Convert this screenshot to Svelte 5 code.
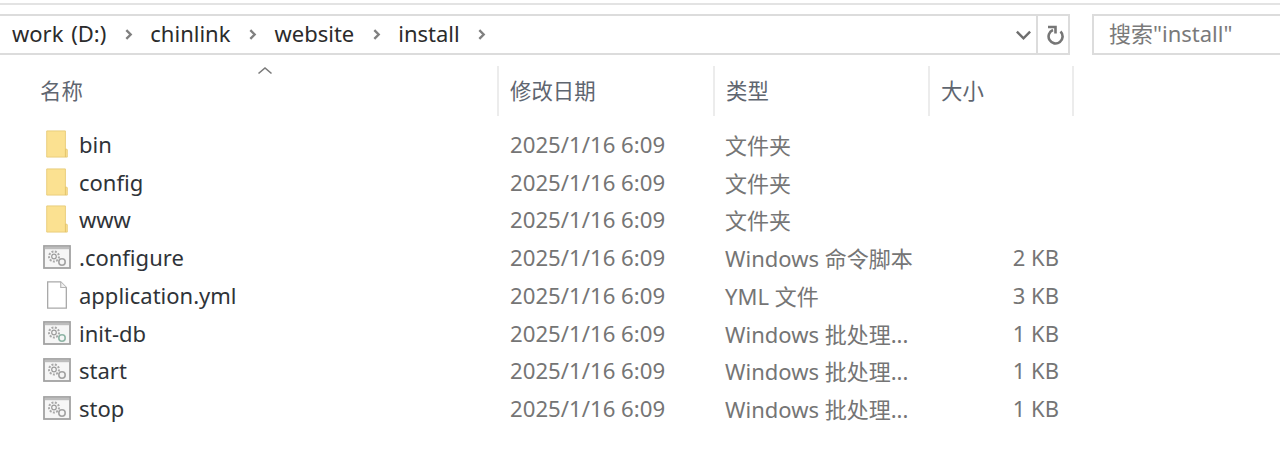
<script>
  const crumbs = ['work (D:)', 'chinlink', 'website', 'install'];
  const date = '2025/1/16 6:09';
  const files = [
    { name: 'bin', icon: 'folder', type: '文件夹', size: '' },
    { name: 'config', icon: 'folder', type: '文件夹', size: '' },
    { name: 'www', icon: 'folder', type: '文件夹', size: '' },
    { name: '.configure', icon: 'script', type: 'Windows 命令脚本', size: '2 KB' },
    { name: 'application.yml', icon: 'file', type: 'YML 文件', size: '3 KB' },
    { name: 'init-db', icon: 'script', type: 'Windows 批处理...', size: '1 KB' },
    { name: 'start', icon: 'script', type: 'Windows 批处理...', size: '1 KB' },
    { name: 'stop', icon: 'script', type: 'Windows 批处理...', size: '1 KB' }
  ];
</script>

<div class="window">
  <div class="toolbar">
    <div class="address">
      <div class="crumbs">
        {#each crumbs as crumb}
          <span class="crumb">{crumb}</span>
          <svg class="chevron" viewBox="0 0 8 12"><path d="M2 2l4 4-4 4" /></svg>
        {/each}
      </div>
      <svg class="dropdown" viewBox="0 0 18 12"><path d="M2 2.5l7 7 7-7" /></svg>
      <div class="refresh">
        <svg viewBox="0 0 20 20"><path d="M3 2h7.5v6.5M8 5A7 7 0 1 0 15.5 6.5" /></svg>
      </div>
    </div>
    <div class="search">搜索"install"</div>
  </div>

  <div class="header">
    <div class="head name">
      名称
      <svg class="sort" viewBox="0 0 16 8"><path d="M1.5 7l6.5-5.5 6.5 5.5" /></svg>
    </div>
    <div class="head">修改日期</div>
    <div class="head">类型</div>
    <div class="head last">大小</div>
  </div>

  <div class="rows">
    {#each files as file}
      <div class="row">
        <div class="cell-name">
          <span class="icon">
            {#if file.icon === 'folder'}
              <svg viewBox="0 0 24 30">
                <path d="M1 1h20v19l2 1v8H1z" fill="#fbe191" stroke="#e8cb78" />
                <path d="M21 20v9" stroke="#e2c26a" fill="none" />
              </svg>
            {:else if file.icon === 'file'}
              <svg viewBox="0 0 24 30">
                <path d="M2 1h14l6 6v22H2z" fill="#fff" stroke="#a9a9a9" stroke-width="1.4" />
                <path d="M16 1v6h6" fill="#f2f2f2" stroke="#b4b4b4" stroke-width="1.2" />
              </svg>
            {:else}
              <svg viewBox="0 0 28 24">
                <rect x="1" y="1" width="26" height="22" fill="#f6f6f6" stroke="#a2a2a2" stroke-width="1.8" />
                <rect x="1.8" y="1.8" width="24.4" height="2.4" fill="#bdbdbd" />
                <circle cx="11" cy="11.5" r="5" fill="none" stroke="#a8a8a8" stroke-width="2" stroke-dasharray="2 1.4" />
                <circle cx="11" cy="11.5" r="2.3" fill="none" stroke="#9c9c9c" stroke-width="1.2" />
                <circle cx="19" cy="17" r="3.2" fill="#f6f6f6" stroke={file.name === 'init-db' ? '#8fb5a6' : '#a3a3a3'} stroke-width="1.6" />
              </svg>
            {/if}
          </span>
          <span class="filename">{file.name}</span>
        </div>
        <div class="cell date">{date}</div>
        <div class="cell">{file.type}</div>
        <div class="cell size">{file.size}</div>
      </div>
    {/each}
  </div>
</div>

<style>
  :global(body) {
    background: #fff;
  }

  .window {
    height: 465px;
    overflow: hidden;
    box-sizing: border-box;
    padding-top: 3px;
    font-family: "Noto Sans", "Noto Sans CJK SC", sans-serif;
    font-size: 22px;
    color: #6f6f6f;
    background: #fff;
  }

  .toolbar {
    display: flex;
    gap: 22px;
    height: 40px;
    padding-top: 9px;
    border-top: 2px solid #e3e3e3;
    margin-bottom: 12px;
  }

  .address {
    flex: none;
    width: 1070px;
    height: 41px;
    box-sizing: border-box;
    display: flex;
    align-items: center;
    border: solid #dcdcdc;
    border-width: 2px 2px 2px 0;
  }

  .crumbs {
    flex: 1;
    display: flex;
    align-items: center;
    padding-left: 12px;
    padding-bottom: 1px;
  }

  .crumb {
    color: #2b2b2b;
    line-height: 30px;
    margin-bottom: 3px;
  }

  .crumb:first-child {
    word-spacing: 2px;
  }

  .chevron {
    width: 9px;
    height: 13px;
    margin: 0 17.5px;
    fill: none;
    stroke: #808080;
    stroke-width: 2.2;
  }

  .dropdown {
    width: 17px;
    height: 12px;
    margin-right: 4px;
    fill: none;
    stroke: #6e6e6e;
    stroke-width: 2.6;
  }

  .refresh {
    width: 30px;
    height: 100%;
    box-sizing: content-box;
    display: flex;
    align-items: center;
    justify-content: flex-end;
    padding-right: 0;
    border-left: 2px solid #dcdcdc;
  }

  .refresh svg {
    width: 20px;
    height: 20px;
    margin-right: 3px;
    fill: none;
    stroke: #767676;
    stroke-width: 2.6;
  }

  .search {
    flex: 1;
    height: 41px;
    box-sizing: border-box;
    padding-left: 15px;
    line-height: 35px;
    color: #7a7a7a;
    border: solid #dcdcdc;
    border-width: 2px 0 2px 2px;
  }

  .header {
    display: grid;
    grid-template-columns: 497px 216px 215px 146px;
    height: 50px;
    margin-top: 1px;
  }

  .head {
    position: relative;
    box-sizing: border-box;
    padding-left: 11px;
    font-size: 21.4px;
    line-height: 50px;
    border-left: 2px solid #ececec;
    color: #5f6670;
  }

  .head.name {
    padding-left: 40px;
    border-left: 0;
  }

  .head.last {
    border-right: 2px solid #ececec;
  }

  .sort {
    position: absolute;
    left: 257px;
    top: 0;
    width: 16px;
    height: 9px;
    fill: none;
    stroke: #7a7a7a;
    stroke-width: 1.6;
  }

  .rows {
    margin-top: 9px;
  }

  .row {
    display: grid;
    grid-template-columns: 498px 215px 216px 130px;
    height: 37.75px;
    align-items: center;
  }

  .cell-name {
    display: flex;
    align-items: center;
    padding-left: 43px;
  }

  .icon {
    width: 36px;
    display: flex;
    align-items: center;
  }

  .icon svg {
    width: 28px;
    height: 28px;
  }

  .filename {
    color: #2f3338;
  }

  .cell {
    padding-left: 12px;
    color: #757575;
  }

  .cell.date {
    font-size: 22.2px;
    padding-top: 1px;
  }

  .cell.size {
    text-align: right;
  }
</style>
